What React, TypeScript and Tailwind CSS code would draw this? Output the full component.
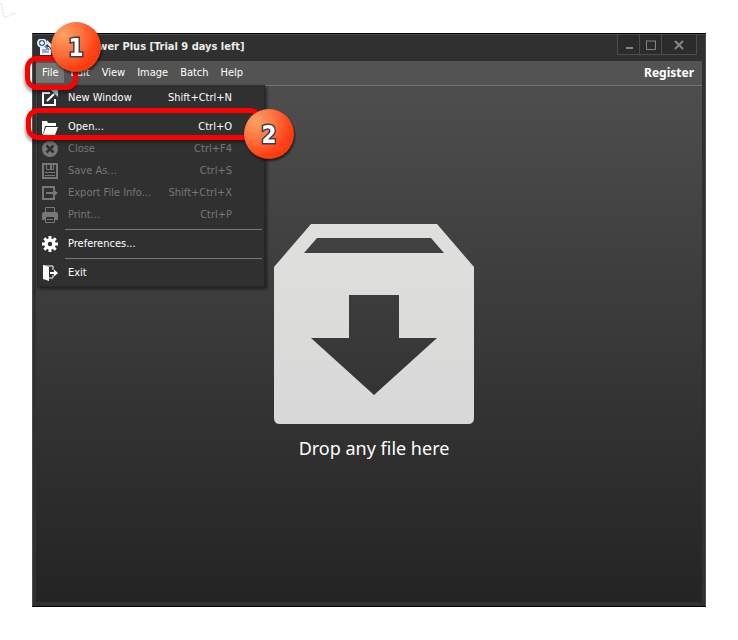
import type { ReactNode } from "react"

type Item = {
  label: string
  keys?: string
  disabled?: boolean
  icon: ReactNode
}

const groups: Item[][] = [
  [{ label: "New Window", keys: "Shift+Ctrl+N", icon: <NewWindowIcon /> }],
  [
    { label: "Open...", keys: "Ctrl+O", icon: <FolderIcon /> },
    { label: "Close", keys: "Ctrl+F4", disabled: true, icon: <CloseIcon /> },
    { label: "Save As...", keys: "Ctrl+S", disabled: true, icon: <SaveIcon /> },
    { label: "Export File Info...", keys: "Shift+Ctrl+X", disabled: true, icon: <ExportIcon /> },
    { label: "Print...", keys: "Ctrl+P", disabled: true, icon: <PrintIcon /> },
  ],
  [{ label: "Preferences...", icon: <GearIcon /> }],
  [{ label: "Exit", icon: <ExitIcon /> }],
]

function Icon({ children }: { children: ReactNode }) {
  return (
    <svg className="block size-4" viewBox="0 0 16 16" fill="none" stroke="none" aria-hidden="true">
      {children}
    </svg>
  )
}

function NewWindowIcon() {
  return (
    <Icon>
      <path d="M8 3H1v12h12V9" stroke="currentColor" strokeWidth="2" />
      <path d="M5 11l7-7" stroke="currentColor" strokeWidth="2" />
      <path d="M9 0h7v7z" fill="#a9cdea" />
    </Icon>
  )
}

function FolderIcon() {
  return (
    <Icon>
      <path d="M0 15V2h5l1 2h8v3H3L1 15z" fill="currentColor" />
      <path d="M4 8h12l-3 8H1z" fill="currentColor" />
    </Icon>
  )
}

function CloseIcon() {
  return (
    <Icon>
      <circle cx="8" cy="8" r="8" fill="currentColor" />
      <path d="M4.500 4.500l7 7M11.500 4.500l-7 7" stroke="#303030" strokeWidth="2.500" />
    </Icon>
  )
}

function SaveIcon() {
  return (
    <Icon>
      <path d="M1 1h14v14H1z" stroke="currentColor" strokeWidth="2" />
      <path d="M4.500 1v5.500h7V1M3 9.500h10M3 12.500h10" stroke="currentColor" />
      <path d="M8 2h2v4H8z" fill="currentColor" />
    </Icon>
  )
}

function ExportIcon() {
  return (
    <Icon>
      <path d="M12 5V2H1v12h11v-3" stroke="currentColor" strokeWidth="2" />
      <path d="M4 7h7V4l5 4-5 4V9H4z" fill="currentColor" />
    </Icon>
  )
}

function PrintIcon() {
  return (
    <Icon>
      <path d="M3.500 5V.5h9V5M3.500 10v5.500h9V10" stroke="currentColor" />
      <path d="M2 5h12q2 0 2 2v6h-3v-3H3v3H0V7q0-2 2-2z" fill="currentColor" />
      <path d="M5 12h6v1H5z" fill="currentColor" />
    </Icon>
  )
}

function GearIcon() {
  return (
    <Icon>
      <circle cx="8" cy="8" r="4" stroke="currentColor" strokeWidth="3.500" />
      <path
        d="M8 0v3M8 13v3M0 8h3M13 8h3M2.300 2.300l2.200 2.200M11.500 11.500l2.200 2.200M13.700 2.300l-2.200 2.200M4.500 11.500l-2.200 2.200"
        stroke="currentColor"
        strokeWidth="3"
      />
    </Icon>
  )
}

function ExitIcon() {
  return (
    <Icon>
      <path d="M1 0l6 2v14l-6-2z" fill="currentColor" />
      <path d="M1 1h10v4M11 10v3H7" stroke="currentColor" />
      <path d="M8 7h4V4.500l4 3.500-4 3.500V9H8z" fill="currentColor" />
    </Icon>
  )
}

function AppIcon() {
  return (
    <svg className="block size-4" viewBox="0 0 16 16" aria-hidden="true">
      <path d="M3 8h9l2 3v5H3z" fill="#f2f7fc" />
      <path d="M5 11h5M5 13h7" stroke="#41659c" />
      <circle cx="5" cy="4" r="4" fill="#34558b" stroke="#dcecf9" strokeWidth="2" />
      <path d="M5 2v4M3 4h4" stroke="#fff" strokeWidth="1.500" />
      <path d="M8 7l4 4" stroke="#5b82b8" strokeWidth="2" />
      <path d="M10 1l5 5v4l-5-5z" fill="#dcecf9" />
    </svg>
  )
}

function Badge({ n }: { n: string }) {
  return (
    <svg className="block h-13 w-13 drop-shadow-[1px_2px_1px_rgba(0,0,0,0.6)]" viewBox="0 0 52 52">
      <defs>
        <radialGradient id={"ball" + n} cx="0.25" cy="0.25" r="0.8">
          <stop offset="0" stopColor="#fba264" />
          <stop offset="0.5" stopColor="#ff6d3a" />
          <stop offset="0.85" stopColor="#ff4216" />
          <stop offset="1" stopColor="#f93a12" />
        </radialGradient>
      </defs>
      <circle cx="26" cy="26" r="25" fill={"url(#ball" + n + ")"} />
      <text
        x="26"
        y="35"
        textAnchor="middle"
        fontFamily="'DejaVu Sans Condensed', 'DejaVu Sans', sans-serif"
        fontWeight="700"
        fontSize="24"
        fill="#fff"
        stroke="#3a3f48"
        strokeWidth="3"
        paintOrder="stroke"
      >
        {n}
      </text>
    </svg>
  )
}

function DropBox() {
  return (
    <svg className="block size-[200px]" viewBox="0 0 200 200" aria-hidden="true">
      <defs>
        <linearGradient id="box" x1="0" y1="0" x2="0" y2="1">
          <stop offset="0" stopColor="#dfdfdd" />
          <stop offset="1" stopColor="#d8d8d8" />
        </linearGradient>
      </defs>
      <path
        fill="url(#box)"
        fillRule="evenodd"
        d="M37 0h126l37 43v151q0 6-6 6H6q-6 0-6-6V43zM43 14L30 29h140l-13-15zM75 71v43H37l63 57 63-57h-38V71z"
      />
    </svg>
  )
}

function FileMenu() {
  return (
    <div
      role="menu"
      className="absolute top-full left-px z-10 w-[228px] border border-t-0 border-[#262626] bg-[#303030] py-0.5 shadow-[2px_2px_3px_rgba(0,0,0,0.5)]"
    >
      {groups.map((group, i) => (
        <div key={i}>
          {i > 0 && (
            <div className="flex h-[7px] items-center pr-0.5 pl-[27px]">
              <div className={i === 1 ? "h-px flex-1 bg-[#303030]" : "h-px flex-1 bg-[#777777]"} />
            </div>
          )}
          {group.map((item) => (
            <button
              key={item.label}
              role="menuitem"
              disabled={item.disabled}
              className="flex h-[22px] w-full items-center pr-8 pl-1 text-white disabled:text-[#777777]"
            >
              {item.icon}
              <span className="ml-2.5 flex-1 text-left whitespace-nowrap">{item.label}</span>
              <span>{item.keys}</span>
            </button>
          ))}
        </div>
      ))}
    </div>
  )
}

export default function App() {
  return (
    <div className="relative flex min-h-screen flex-col bg-white px-8 py-[33px] font-['DejaVu_Sans_Condensed','DejaVu_Sans',sans-serif] text-[11px] leading-4">
      <svg className="absolute top-0 left-0 h-5 w-5" viewBox="0 0 20 20" fill="none" aria-hidden="true">
        <path d="M1 3l3 14 5-1M10 15l6-2" stroke="#e2d9de" strokeDasharray="2 1" />
      </svg>

      <div className="relative flex flex-1 flex-col border-x border-y border-x-[#4d4d4d] border-y-black bg-[#303030]">
        <header className="flex h-[27px] items-start justify-between border-t border-[#4a4a4a] pr-2 pl-1">
          <div className="flex h-6 items-center gap-1">
            <AppIcon />
            <h1 className="font-bold whitespace-nowrap text-[#ececec]">File Viewer Plus [Trial 9 days left]</h1>
          </div>
          <div className="flex h-5 divide-x divide-[#4d4d4d] border border-t-0 border-[#4d4d4d] bg-[#2b2b2b] text-[#858585]">
            <button aria-label="Minimize" className="flex w-[22px] items-center justify-center">
              <svg className="size-3" viewBox="0 0 12 12" aria-hidden="true">
                <path d="M3 8h7v2H3z" fill="currentColor" />
              </svg>
            </button>
            <button aria-label="Maximize" className="flex w-[22px] items-center justify-center">
              <svg className="size-3" viewBox="0 0 12 12" fill="none" aria-hidden="true">
                <path d="M1 2h10M1.500 2v8.500h9V2" stroke="currentColor" />
              </svg>
            </button>
            <button aria-label="Close" className="flex w-[34px] items-center justify-center">
              <svg className="size-3" viewBox="0 0 12 12" fill="none" aria-hidden="true">
                <path d="M2 2l8 8M10 2l-8 8" stroke="currentColor" strokeWidth="2" />
              </svg>
            </button>
          </div>
        </header>

        <div className="mx-[3px] mb-1 flex flex-1 flex-col bg-linear-to-b from-[#505050] to-[#242424]">
          <nav className="relative flex h-[25px] items-center justify-between border-b border-[#737373] bg-[#535353] pr-2 text-white">
            <div className="flex">
              {["File", "Edit", "View", "Image", "Batch", "Help"].map((name) => (
                <button key={name} className={name === "File" ? "h-5 bg-[#757575] px-1.5" : "h-5 px-1.5"}>
                  {name}
                </button>
              ))}
            </div>
            <a href="#register" className="font-['Noto_Sans',sans-serif] text-xs font-bold">
              Register
            </a>
            <FileMenu />
          </nav>

          <main className="flex flex-1 flex-col items-center justify-center pb-1 pl-2.5">
            <DropBox />
            <p className="mt-3 font-['Noto_Sans',sans-serif] text-lg leading-6 text-white">Drop any file here</p>
          </main>
        </div>

        {/* step markers */}
        <div className="absolute top-[22px] -left-2 z-20 h-[34px] w-[53px] rounded-xl border-5 border-[#ff0000] shadow-[-1px_3px_3px_rgba(0,0,0,0.35)]" />
        <div className="absolute top-[74px] -left-[7px] z-20 h-[32px] w-[236px] rounded-xl border-5 border-[#ff0000] shadow-[-1px_3px_3px_rgba(0,0,0,0.35)]" />
        <div className="absolute -top-[13px] left-[17px] z-20">
          <Badge n="1" />
        </div>
        <div className="absolute top-[74px] left-[210px] z-20">
          <Badge n="2" />
        </div>
      </div>
    </div>
  )
}
